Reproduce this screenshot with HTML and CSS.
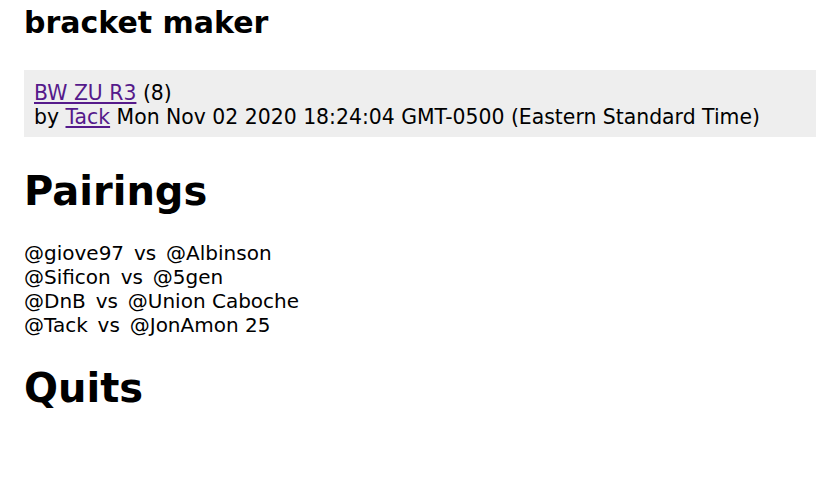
FILE: index.html
```html
<!DOCTYPE html>
<html>
<head>
<meta charset="utf-8">
<link rel="stylesheet" href="styles.css">
</head>
<body>
<div class="page">
  <div class="title">bracket maker</div>
  <div class="info">
    <div><a href="#" class="link">BW ZU R3</a> (8)</div>
    <div>by <a href="#" class="link">Tack</a> Mon Nov 02 2020 18:24:04 GMT-0500 (Eastern Standard Time)</div>
  </div>
  <h1 class="section">Pairings</h1>
  <div class="pairings">
    <div>@giove97 <span class="vs">vs</span> @Albinson</div>
    <div>@Sificon <span class="vs">vs</span> @5gen</div>
    <div>@DnB <span class="vs">vs</span> @Union Caboche</div>
    <div>@Tack <span class="vs">vs</span> @JonAmon 25</div>
  </div>
  <h1 class="section quits">Quits</h1>
</div>
</body>
</html>
```

FILE: styles.css
```css
html, body {
  margin: 0;
  padding: 0;
  background: #fff;
  overflow: hidden;
}
.page {
  padding-left: 24px;
  font-family: "DejaVu Sans", Verdana, sans-serif;
  color: #000;
}
.title {
  font-size: 30px;
  font-weight: bold;
  line-height: 34px;
  margin: 6px 0 0 0;
}
.info {
  background: #eeeeee;
  margin-top: 30px;
  padding: 11px 10px 8px 10px;
  font-size: 20.4px;
  line-height: 24px;
}
.link {
  color: #551a8b;
  text-decoration: underline;
}
.section {
  font-size: 40px;
  line-height: 48px;
  font-weight: bold;
  margin: 30px 0 0 0;
}
.pairings {
  margin-top: 26px;
  font-size: 20px;
  line-height: 24px;
}
.vs {
  margin: 0 3.5px;
}
.section.quits {
  margin-top: 27px;
}
```
